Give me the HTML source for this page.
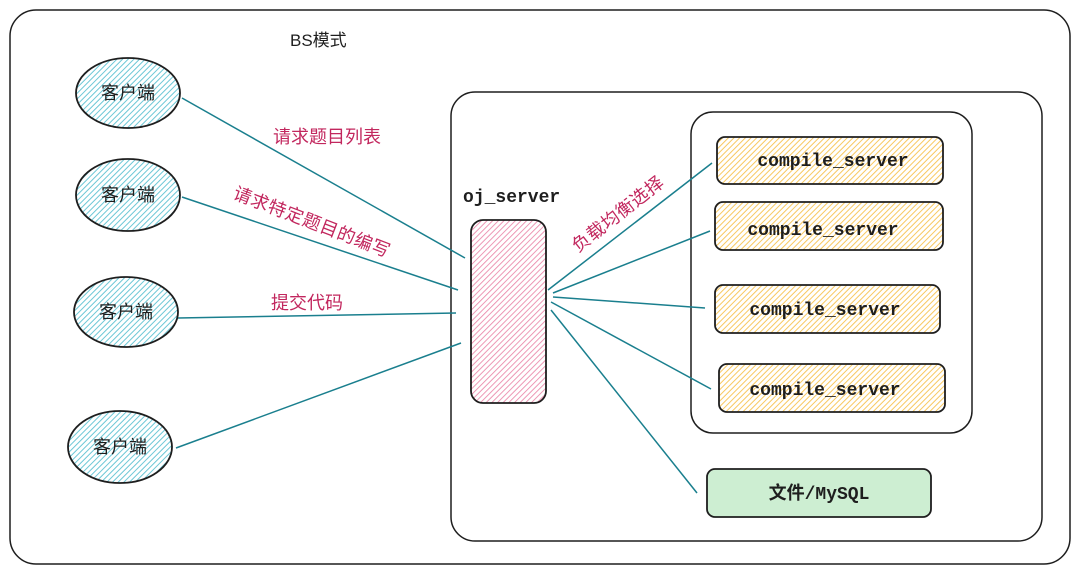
<!DOCTYPE html>
<html><head><meta charset="utf-8"><style>
html,body{margin:0;padding:0;background:#fff;width:1080px;height:574px;overflow:hidden}
svg{display:block}
.t{font-family:"Liberation Sans","Noto Sans CJK SC",sans-serif}
.m{font-family:"Liberation Mono","Noto Sans CJK SC",monospace}
</style></head><body>
<svg width="1080" height="574" viewBox="0 0 1080 574">
<defs>
<pattern id="hb" width="4" height="4" patternUnits="userSpaceOnUse" patternTransform="rotate(45)"><rect width="4" height="4" fill="#fff"/><line x1="0" y1="0" x2="0" y2="4" stroke="#6cc7d6" stroke-width="2"/></pattern>
<pattern id="hp" width="4" height="4" patternUnits="userSpaceOnUse" patternTransform="rotate(45)"><rect width="4" height="4" fill="#fff"/><line x1="0" y1="0" x2="0" y2="4" stroke="#ea86a8" stroke-width="1.7"/></pattern>
<pattern id="hy" width="4" height="4" patternUnits="userSpaceOnUse" patternTransform="rotate(45)"><rect width="4" height="4" fill="#fff"/><line x1="0" y1="0" x2="0" y2="4" stroke="#f8c860" stroke-width="2"/></pattern>
</defs>
<rect x="10" y="10" width="1060" height="554" rx="26" fill="none" stroke="#1e1e1e" stroke-width="1.5"/>
<text x="290" y="46" class="t" font-size="17" fill="#1e1e1e">BS模式</text>
<rect x="451" y="92" width="591" height="449" rx="24" fill="none" stroke="#1e1e1e" stroke-width="1.5"/>
<rect x="691" y="112" width="281" height="321" rx="22" fill="none" stroke="#1e1e1e" stroke-width="1.5"/>
<g stroke="#1a7f8e" stroke-width="1.5" fill="none">
<line x1="182" y1="98" x2="465" y2="258"/>
<line x1="182" y1="197" x2="458" y2="290"/>
<line x1="178" y1="318" x2="456" y2="313"/>
<line x1="176" y1="448" x2="461" y2="343"/>
<line x1="548" y1="290" x2="712" y2="163"/>
<line x1="553" y1="293" x2="710" y2="231"/>
<line x1="553" y1="297" x2="705" y2="308"/>
<line x1="551" y1="302" x2="711" y2="389"/>
<line x1="551" y1="310" x2="697" y2="493"/>
</g>
<g stroke="#1e1e1e" stroke-width="1.8" fill="url(#hb)">
<ellipse cx="128" cy="93" rx="52" ry="35"/>
<ellipse cx="128" cy="195" rx="52" ry="36"/>
<ellipse cx="126" cy="312" rx="52" ry="35"/>
<ellipse cx="120" cy="447" rx="52" ry="36"/>
</g>
<g class="t" font-size="18" fill="#1e1e1e" text-anchor="middle">
<text x="128" y="99">客户端</text>
<text x="128" y="201">客户端</text>
<text x="126" y="318">客户端</text>
<text x="120" y="453">客户端</text>
</g>
<rect x="471" y="220" width="75" height="183" rx="12" fill="url(#hp)" stroke="#1e1e1e" stroke-width="1.8"/>
<text x="463" y="202" class="m" font-size="18" font-weight="bold" fill="#1e1e1e">oj_server</text>
<g stroke="#1e1e1e" stroke-width="1.8" fill="url(#hy)">
<rect x="717" y="137" width="226" height="47" rx="8"/>
<rect x="715" y="202" width="228" height="48" rx="8"/>
<rect x="715" y="285" width="225" height="48" rx="8"/>
<rect x="719" y="364" width="226" height="48" rx="8"/>
</g>
<rect x="707" y="469" width="224" height="48" rx="8" fill="#cdeed2" stroke="#1e1e1e" stroke-width="1.8"/>
<g class="m" font-size="18" font-weight="bold" fill="#1e1e1e" text-anchor="middle">
<text x="833" y="166">compile_server</text>
<text x="823" y="235">compile_server</text>
<text x="825" y="315">compile_server</text>
<text x="825" y="395">compile_server</text>
<text x="819" y="499">文件/MySQL</text>
</g>
<g class="t" font-size="18" fill="#c2275e">
<text x="273" y="143">请求题目列表</text>
<text x="271" y="309">提交代码</text>
<text x="232" y="198" transform="rotate(21 232 198)" letter-spacing="0.5">请求特定题目的编写</text>
<text x="578" y="253" transform="rotate(-38 578 253)" letter-spacing="0.5">负载均衡选择</text>
</g>
</svg>
</body></html>
